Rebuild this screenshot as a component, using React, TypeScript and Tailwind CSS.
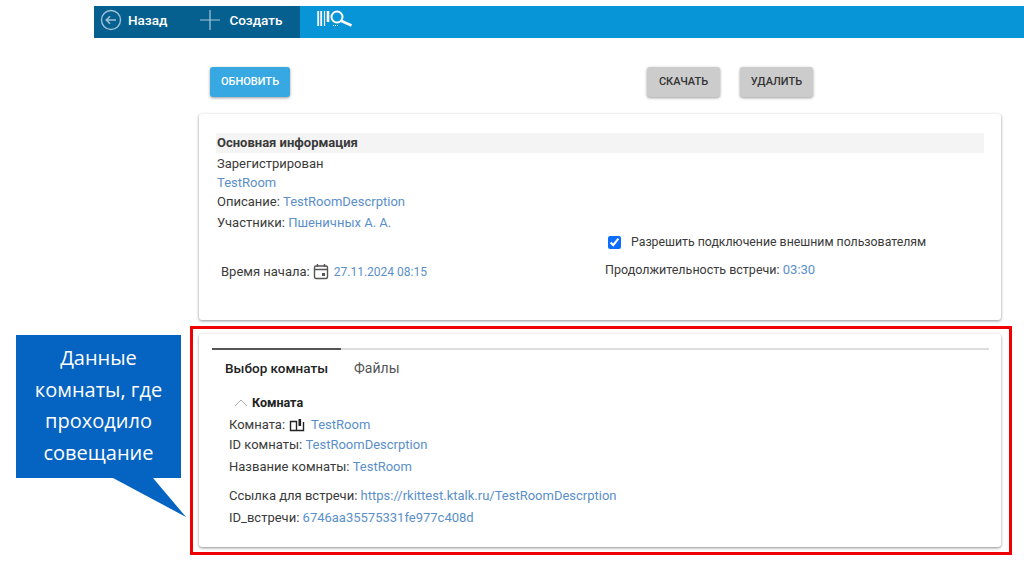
import React from "react";

const link = "text-[#5a8fc9]";

function BackIcon() {
  return (
    <svg width="22" height="22" viewBox="0 0 22 22" fill="none" stroke="#9fc0d6" strokeWidth="1.4">
      <circle cx="11" cy="11" r="9.5" />
      <path d="M16 11H6.5M10 7.2L6.3 11l3.7 3.8" strokeWidth="1.6" />
    </svg>
  );
}

function PlusIcon() {
  return (
    <svg width="20" height="20" viewBox="0 0 20 20" stroke="#a8c8dc" strokeWidth="1.2">
      <path d="M10 0v20M0 10h20" />
    </svg>
  );
}

function LibraryIcon() {
  return (
    <svg width="36" height="18" viewBox="0 0 36 18" fill="none" stroke="#fff">
      <path d="M1.2 1v15M4.2 1v15" strokeWidth="1.8" />
      <path d="M7.5 1v15" strokeWidth="1.2" />
      <path d="M11 1v11" strokeWidth="2.6" />
      <circle cx="20" cy="7" r="5.5" strokeWidth="2" />
      <path d="M24.5 11l10 4.5" strokeWidth="2.6" />
      <path d="M16 15.5h6" strokeWidth="1" strokeDasharray="1 1" />
    </svg>
  );
}

function CalendarIcon() {
  return (
    <svg width="16" height="17" viewBox="0 0 16 17" fill="none" stroke="#555">
      <rect x="1.5" y="3" width="13" height="12.5" rx="1.5" strokeWidth="1.4" />
      <path d="M1.5 6.5h13M4.5 1v3M11.5 1v3" strokeWidth="1.4" />
      <rect x="9" y="10" width="3" height="3" fill="#555" stroke="none" />
    </svg>
  );
}

function RoomIcon() {
  return (
    <svg width="16" height="14" viewBox="0 0 16 14" fill="none" stroke="#222" strokeWidth="1.4">
      <path d="M1.5 3.5h6v9h-6zM7.5 12.5h7V4" />
      <path d="M10.8 1v7" strokeWidth="2.6" />
    </svg>
  );
}

function Chevron() {
  return (
    <svg width="14" height="8" viewBox="0 0 14 8" fill="none" stroke="#aaa" strokeWidth="1">
      <path d="M1 7l6-6 6 6" />
    </svg>
  );
}

function Callout() {
  return (
    <div className="absolute left-[16px] top-[335px] w-[165px] h-[143px] bg-[#0563c1] text-white text-[20px] leading-[31.5px] text-center pt-[7px] font-['Open_Sans',sans-serif]">
      <div>Данные</div>
      <div>комнаты, где</div>
      <div>проходило</div>
      <div>совещание</div>
      <svg className="absolute left-[90px] top-[143px]" width="82" height="40" viewBox="0 0 82 40" fill="#0563c1">
        <path d="M7 0H47L80 39z" />
      </svg>
    </div>
  );
}

export default function App() {
  return (
    <div className="relative w-[1024px] h-[562px] overflow-hidden bg-white font-['Roboto',sans-serif] text-[13px] text-[#3a3a3a]">
      <div className="pt-[6px] pl-[94px]">
        <div className="flex h-[32px] bg-[#0795d8] text-white text-[13.5px] font-medium">
          <div className="flex items-center w-[206px] pb-[4px] bg-[#05608f]">
            <div className="ml-[6px]">
              <BackIcon />
            </div>
            <span className="ml-[6px]">Назад</span>
            <div className="ml-[33px]">
              <PlusIcon />
            </div>
            <span className="ml-[9px]">Создать</span>
          </div>
          <div className="flex items-center pb-[6px] ml-[17px]">
            <LibraryIcon />
          </div>
        </div>
      </div>

      <div className="flex mt-[29px] ml-[210px] w-[603px] text-[11px] font-medium">
        <button className="w-[80px] h-[30px] rounded-[3px] bg-[#37a8e2] text-white shadow-[0_1px_3px_rgba(0,0,0,0.4)]">ОБНОВИТЬ</button>
        <button className="ml-auto w-[73px] h-[30px] rounded-[3px] bg-[#cccccc] text-[#333] shadow-[0_1px_3px_rgba(0,0,0,0.4)]">СКАЧАТЬ</button>
        <button className="ml-[20px] w-[73px] h-[30px] rounded-[3px] bg-[#cccccc] text-[#333] shadow-[0_1px_3px_rgba(0,0,0,0.4)]">УДАЛИТЬ</button>
      </div>

      <div className="mt-[17px] ml-[199px] w-[802px] h-[206px] rounded-[3px] bg-white shadow-[0_1px_3px_rgba(0,0,0,0.45)] px-[17px] pt-[19px]">
        <div className="h-[20px] leading-[20px] bg-[#f4f4f4] font-bold w-[768px] pl-[1px]">Основная информация</div>
        <div className="leading-[19.5px] pl-[1px] pt-[1px]">
          <div>Зарегистрирован</div>
          <div className="-mt-[1px]">
            <span className={link}>TestRoom</span>
          </div>
          <div>
            Описание: <span className={link}>TestRoomDescrption</span>
          </div>
          <div className="mt-[1px]">
            Участники: <span className={link}>Пшеничных А. А.</span>
          </div>
        </div>
        <div className="flex">
          <div className="w-[389px] pl-[5px] pt-[27px] flex items-center h-[52px]">
            <span>Время начала:</span>
            <span className="ml-[3px]">
              <CalendarIcon />
            </span>
            <span className={`ml-[5px] text-[12px] mt-[1px] ${link}`}>27.11.2024 08:15</span>
          </div>
          <div>
            <div className="flex items-center h-[20px] pl-[3px] text-[12.3px]">
              <input type="checkbox" defaultChecked className="w-[13px] h-[13px] accent-[#0d6efd]" />
              <span className="ml-[10px]">Разрешить подключение внешним пользователям</span>
            </div>
            <div className="mt-[8px]">
              <span className="text-[12.5px]">Продолжительность встречи:</span> <span className={link}>03:30</span>
            </div>
          </div>
        </div>
      </div>

      <div className="mt-[6px] ml-[190px] w-[822px] h-[229px] border-[3px] border-[#f00000] pl-[6px] pr-[8px] py-[5px]">
        <div className="h-[213px] rounded-[3px] bg-white shadow-[0_1px_3px_rgba(0,0,0,0.45)] px-[13px] pt-[14px]">
          <div className="h-[2px] bg-[#dddddd] w-[777px]">
            <div className="h-[2px] w-[129px] bg-[#555555]" />
          </div>
          <div className="flex mt-[10px] ml-[13px] leading-[16px]">
            <span className="font-medium text-[13.5px] text-[#222]">Выбор комнаты</span>
            <span className="ml-[26px] text-[14px] text-[#555]">Файлы</span>
          </div>
          <div className="ml-[17px] mt-[17px]">
            <div className="flex items-center h-[20px] font-bold text-[12.5px] text-[#222]">
              <span className="ml-[5px] mr-[4px]">
                <Chevron />
              </span>
              Комната
            </div>
            <div className="flex items-center h-[20px] mt-[2px]">
              Комната:
              <span className="ml-[4px] mr-[6px]">
                <RoomIcon />
              </span>
              <span className={link}>TestRoom</span>
            </div>
            <div className="h-[20px] leading-[20px]">
              ID комнаты: <span className={link}>TestRoomDescrption</span>
            </div>
            <div className="h-[22px] leading-[24px]">
              Название комнаты: <span className={link}>TestRoom</span>
            </div>
            <div className="h-[20px] leading-[20px] mt-[9px]">
              Ссылка для встречи: <span className={link}>https://rkittest.ktalk.ru/TestRoomDescrption</span>
            </div>
            <div className="h-[20px] leading-[20px] mt-[2px]">
              ID_встречи: <span className={link}>6746aa35575331fe977c408d</span>
            </div>
          </div>
        </div>
      </div>

      <Callout />
    </div>
  );
}
